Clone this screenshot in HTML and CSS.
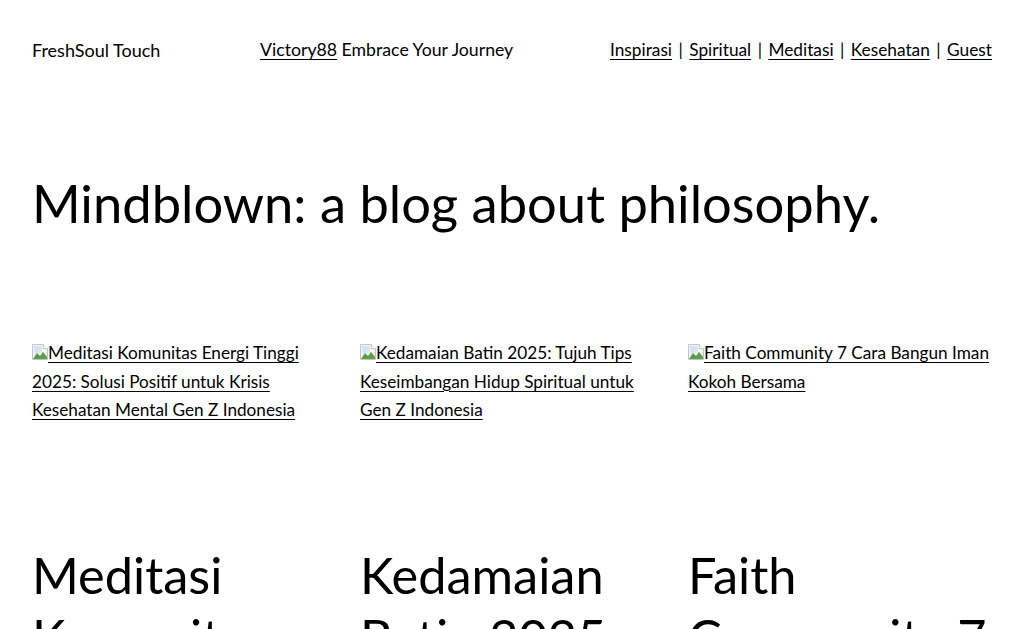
FILE: index.html
```html
<!DOCTYPE html>
<html lang="id">
<head>
<meta charset="utf-8">
<title>FreshSoul Touch</title>
<link rel="stylesheet" href="styles.css">
</head>
<body>
<header class="site-header">
  <p class="site-title">FreshSoul Touch</p>
  <p class="tagline"><a href="#">Victory88</a> Embrace Your Journey</p>
  <nav class="nav">
    <a href="#">Inspirasi</a> <span class="sep">|</span> <a href="#">Spiritual</a> <span class="sep">|</span> <a href="#">Meditasi</a> <span class="sep">|</span> <a href="#">Kesehatan</a> <span class="sep">|</span> <a href="#">Guest</a>
  </nav>
</header>
<main class="main">
  <h1 class="page-title">Mindblown: a blog about philosophy.</h1>
  <div class="posts">
    <article class="post">
      <div class="thumb"><a href="#"><svg class="broken" width="16" height="16" viewBox="0 0 16 16"><path d="M0.5 0.5h11l4 4v11h-15z" fill="#f2f4f6" stroke="#c4c4c4"/><path d="M11.5 0.5v4h4" fill="#ffffff" stroke="#c4c4c4"/><rect x="2" y="2" width="8" height="7" fill="#d6e4f0"/><path d="M1 15l4-6 3 3 3-4 4 5v2H1z" fill="#5c9e48"/></svg>Meditasi Komunitas Energi Tinggi 2025: Solusi Positif untuk Krisis Kesehatan Mental Gen Z Indonesia</a></div>
      <h2 class="post-title">Meditasi Komunitas Energi Tinggi 2025: Solusi Positif untuk Krisis Kesehatan Mental Gen Z Indonesia</h2>
    </article>
    <article class="post">
      <div class="thumb"><a href="#"><svg class="broken" width="16" height="16" viewBox="0 0 16 16"><path d="M0.5 0.5h11l4 4v11h-15z" fill="#f2f4f6" stroke="#c4c4c4"/><path d="M11.5 0.5v4h4" fill="#ffffff" stroke="#c4c4c4"/><rect x="2" y="2" width="8" height="7" fill="#d6e4f0"/><path d="M1 15l4-6 3 3 3-4 4 5v2H1z" fill="#5c9e48"/></svg>Kedamaian Batin 2025: Tujuh Tips Keseimbangan Hidup Spiritual untuk Gen Z Indonesia</a></div>
      <h2 class="post-title">Kedamaian Batin 2025: Tujuh Tips Keseimbangan Hidup Spiritual untuk Gen Z Indonesia</h2>
    </article>
    <article class="post">
      <div class="thumb"><a href="#"><svg class="broken" width="16" height="16" viewBox="0 0 16 16"><path d="M0.5 0.5h11l4 4v11h-15z" fill="#f2f4f6" stroke="#c4c4c4"/><path d="M11.5 0.5v4h4" fill="#ffffff" stroke="#c4c4c4"/><rect x="2" y="2" width="8" height="7" fill="#d6e4f0"/><path d="M1 15l4-6 3 3 3-4 4 5v2H1z" fill="#5c9e48"/></svg>Faith Community 7 Cara Bangun Iman Kokoh Bersama</a></div>
      <h2 class="post-title">Faith Community 7 Cara Bangun Iman Kokoh Bersama</h2>
    </article>
  </div>
</main>
</body>
</html>
```

FILE: styles.css
```css
html, body {
  margin: 0;
  padding: 0;
  background: #ffffff;
  color: #000000;
  font-family: Lato, "Liberation Sans", sans-serif;
  font-size: 17.5px;
}
a {
  color: #000000;
  text-decoration: underline;
  text-underline-offset: 3px;
  text-decoration-thickness: 1px;
}
p { margin: 0; }

.site-header {
  display: flex;
  align-items: center;
  padding: 0 32px;
  height: 100px;
  line-height: 1.6;
}
.site-title { width: 228px; font-size: 18px; }
.tagline { flex: 1; font-size: 17.7px; }
.nav { white-space: nowrap; font-size: 17.3px; }
.sep { margin: 0 2px; }

.main { padding: 0 32px; }
.page-title {
  margin: 71px 0 0;
  font-size: 52.5px;
  font-weight: 400;
  line-height: 1.2;
}
.posts {
  margin-top: 105px;
  display: grid;
  grid-template-columns: repeat(3, minmax(0, 1fr));
  gap: 24px;
}
.post { min-width: 0; }
.thumb {
  height: 100px;
  font-size: 17.2px;
  line-height: 28.5px;
}
.broken { vertical-align: -1px; }
.post-title {
  margin: 104.5px 0 0;
  font-size: 50.5px;
  font-weight: 400;
  line-height: 62px;
}
```
